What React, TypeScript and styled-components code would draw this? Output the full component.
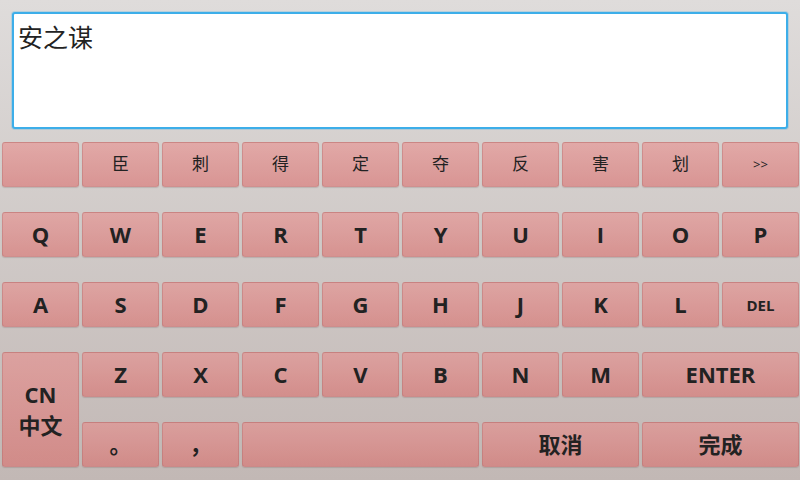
import React from 'react'
import styled, { createGlobalStyle } from 'styled-components'

const GlobalStyle = createGlobalStyle`
  html, body {
    margin: 0;
    padding: 0;
  }
  body {
    font-family: 'Open Sans', 'Noto Sans CJK SC', sans-serif;
  }
`

const Screen = styled.div`
  width: 800px;
  height: 480px;
  box-sizing: border-box;
  padding-top: 12px;
  background: linear-gradient(180deg, #dfdcdb 0%, #d4cfcd 35%, #c2b8b5 100%);
  overflow: hidden;
`

const InputBox = styled.div`
  margin: 0 12px;
  height: 117px;
  box-sizing: border-box;
  background: #ffffff;
  border: 2px solid #3daee9;
  border-radius: 3px;
  box-shadow: 0 0 0 1px rgba(61, 174, 233, 0.25);
  padding: 5px 4px;
  font-family: 'Noto Sans CJK SC', sans-serif;
  font-size: 25px;
  line-height: 34px;
  color: #232323;
`

const Keyboard = styled.div`
  display: grid;
  grid-template-columns: repeat(10, 77px);
  grid-auto-rows: 45px;
  column-gap: 3px;
  row-gap: 25px;
  padding: 13px 0 0 2px;
`

const Key = styled.div<{ $span?: number; $rows?: number; $size?: number; $weight?: number }>`
  grid-column: span ${({ $span }) => $span ?? 1};
  grid-row: span ${({ $rows }) => $rows ?? 1};
  display: flex;
  flex-direction: column;
  align-items: center;
  justify-content: center;
  box-sizing: border-box;
  border: 1px solid rgba(175, 100, 100, 0.35);
  border-radius: 3px;
  background: linear-gradient(180deg, rgba(236, 132, 131, 0.52) 0%, rgba(222, 98, 96, 0.52) 100%);
  box-shadow: 0 1px 1px rgba(90, 60, 60, 0.18);
  color: #222222;
  font-family: 'Open Sans', 'Noto Sans CJK SC', sans-serif;
  font-size: ${({ $size }) => $size ?? 22}px;
  font-weight: ${({ $weight }) => $weight ?? 700};
  line-height: ${({ $rows }) => ($rows && $rows > 1 ? 1.4 : 1.2)};
`

const candidates = ['', '臣', '刺', '得', '定', '夺', '反', '害', '划']
const rowQ = ['Q', 'W', 'E', 'R', 'T', 'Y', 'U', 'I', 'O', 'P']
const rowA = ['A', 'S', 'D', 'F', 'G', 'H', 'J', 'K', 'L']
const rowZ = ['Z', 'X', 'C', 'V', 'B', 'N', 'M']

const App: React.FC = () => {
  return (
    <>
      <GlobalStyle />
      <Screen>
        <InputBox>安之谋</InputBox>
        <Keyboard>
          {candidates.map((c, i) => (
            <Key key={`c${i}`} $size={17} $weight={400}>
              {c}
            </Key>
          ))}
          <Key $size={13} $weight={400}>&gt;&gt;</Key>

          {rowQ.map((k) => (
            <Key key={k}>{k}</Key>
          ))}

          {rowA.map((k) => (
            <Key key={k}>{k}</Key>
          ))}
          <Key $size={15}>DEL</Key>

          <Key $rows={2}>
            <span>CN</span>
            <span>中文</span>
          </Key>
          {rowZ.map((k) => (
            <Key key={k}>{k}</Key>
          ))}
          <Key $span={2}>ENTER</Key>

          <Key>。</Key>
          <Key>，</Key>
          <Key $span={3} />
          <Key $span={2}>取消</Key>
          <Key $span={2}>完成</Key>
        </Keyboard>
      </Screen>
    </>
  )
}

export default App
